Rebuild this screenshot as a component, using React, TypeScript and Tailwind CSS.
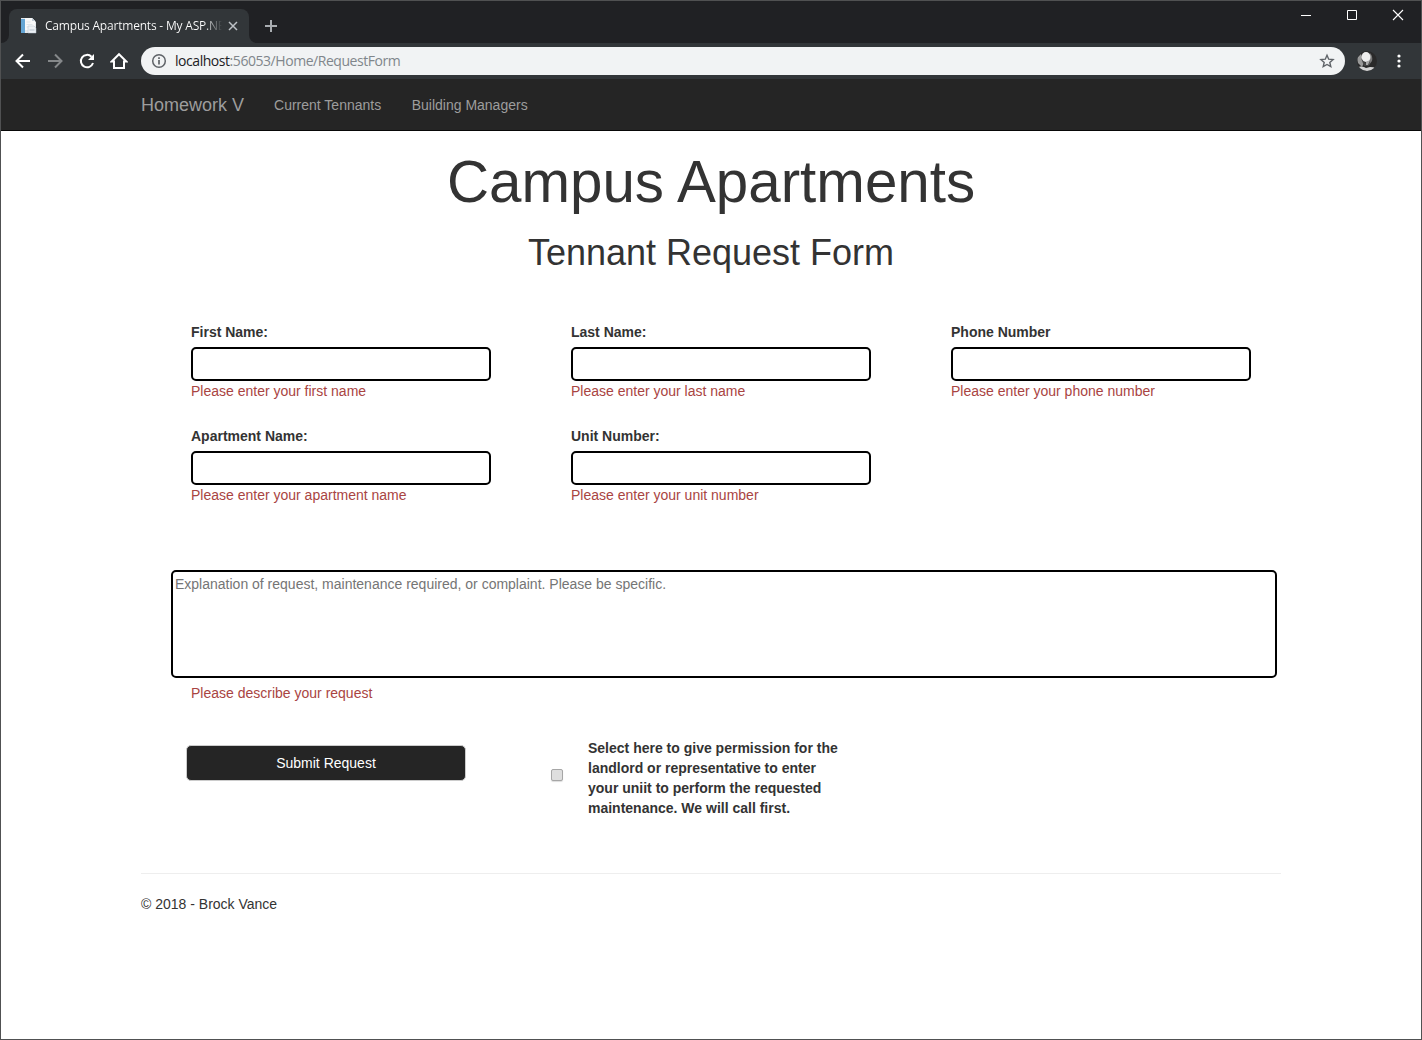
import React from "react";

const chromeFont = "font-['Open_Sans','Noto_Sans',sans-serif]";

function TabStrip() {
  return (
    <div className="flex h-[42px] items-end bg-[#202124]">
      <div className="flex h-[34px] w-2 items-end bg-[#323639]">
        <div className="h-full w-full rounded-br-lg bg-[#202124]" />
      </div>
      <div className="flex h-[34px] w-[240px] items-center rounded-t-lg bg-[#323639] pl-[11px]">
        <svg width="18" height="18" viewBox="0 0 18 18">
          <path d="M1 1h11l4 4v11H1z" fill="#e4e9ed" />
          <path d="M1 2h4v14H1z" fill="#64a5d4" />
          <path d="M5 1h7l3 3v9H5z" fill="#f8f9fa" />
          <path d="M12 1v3h3z" fill="#c2cdd7" />
          <path d="M6.500 5h4M6.500 7.500h6M6.500 10h6" stroke="#e0e6ea" />
          <path d="M8 9h6l2 2v5H8z" fill="#edf1f5" stroke="#b5c2cd" strokeWidth=".5" />
          <path d="M9.500 13h5" stroke="#b5c2cd" />
        </svg>
        <span
          className={`${chromeFont} ml-[7px] w-[177px] bg-gradient-to-r from-white from-90% to-transparent bg-clip-text text-[12px] leading-[18px] tracking-[-0.2px] whitespace-nowrap text-transparent`}
        >
          Campus Apartments - My ASP.NE
        </span>
        <svg className="ml-[6px]" width="10" height="10" viewBox="0 0 10 10">
          <path d="m1 1 8 8M9 1 1 9" stroke="#bdc1c6" strokeWidth="1.500" />
        </svg>
      </div>
      <div className="h-[34px] w-2 bg-[#323639]">
        <div className="h-full w-full rounded-bl-lg bg-[#202124]" />
      </div>
      <svg className="mb-[11px] ml-[8px]" width="12" height="12" viewBox="0 0 12 12">
        <path d="M6 0v12M0 6h12" stroke="#a9adb1" strokeWidth="2" />
      </svg>
      <div className="mr-[17px] mb-[22px] ml-auto flex items-center">
        <svg className="mr-[35px]" width="10" height="12" viewBox="0 0 10 12">
          <path d="M0 6.500h10" stroke="#fff" />
        </svg>
        <svg className="mr-[34px]" width="12" height="12" viewBox="0 0 12 12">
          <path d="M1.500 1.500h9v9h-9z" fill="none" stroke="#fff" />
        </svg>
        <svg width="12" height="12" viewBox="0 0 12 12">
          <path d="m1 1 10 10M11 1 1 11" stroke="#fff" strokeWidth="1.100" />
        </svg>
      </div>
    </div>
  );
}

function Toolbar() {
  return (
    <div className="flex h-9 items-center bg-[#323639] pl-[13px]">
      <div className="flex gap-[14px]">
        <svg width="18" height="18" viewBox="0 0 18 18" fill="none" stroke="#fff" strokeWidth="2">
          <path d="M16 9H3M9 2.500 2.500 9 9 15.500" />
        </svg>
        <svg width="18" height="18" viewBox="0 0 18 18" fill="none" stroke="#85888a" strokeWidth="2">
          <path d="M2 9h13M9 2.500 15.500 9 9 15.500" />
        </svg>
        <svg width="18" height="18" viewBox="0 0 18 18" fill="none">
          <path d="M15 11A6.200 6.200 0 1 1 13.500 4.700" stroke="#fff" strokeWidth="2" />
          <path d="M16 2v6h-6z" fill="#fff" />
        </svg>
        <svg width="18" height="18" viewBox="0 0 18 18" fill="none" stroke="#fff" strokeWidth="2">
          <path d="M1.700 9.500H4V16h10V9.500h2.300L9 2.200z" />
        </svg>
      </div>
      <div className="ml-[13px] flex h-7 w-[1204px] items-center rounded-full bg-[#f1f3f4] pl-[10px]">
        <svg width="16" height="16" viewBox="0 0 16 16" fill="none">
          <circle cx="8" cy="8" r="6.300" stroke="#5f6368" strokeWidth="1.500" />
          <path d="M8 7v4.500M8 4.200V6" stroke="#5f6368" strokeWidth="1.700" />
        </svg>
        <span className={`${chromeFont} ml-2 text-[14px] leading-5 tracking-[-0.45px] text-[#80868b]`}>
          <span className="text-[#202124]">localhost</span>:56053/Home/RequestForm
        </span>
        <svg className="mr-[10px] ml-auto" width="16" height="16" viewBox="0 0 16 16">
          <path
            d="m8 2.200 1.700 4 4.400.4-3.300 2.900 1 4.200L8 11.500l-3.800 2.200 1-4.200-3.300-2.900 4.400-.4z"
            fill="none"
            stroke="#5f6368"
            strokeWidth="1.400"
          />
        </svg>
      </div>
      <svg className="ml-[12px]" width="20" height="20" viewBox="0 0 20 20">
        <defs>
          <clipPath id="avatar">
            <circle cx="10" cy="10" r="10" />
          </clipPath>
        </defs>
        <g clipPath="url(#avatar)">
          <path d="M0 0h20v20H0z" fill="#292929" />
          <path d="M0 7 4 3l3 9-2 4-4-4z" fill="#999" />
          <path d="M13 2q3 3 2 8l-3 4-2-3z" fill="#777" />
          <ellipse cx="9" cy="6" rx="4.500" ry="5" fill="#eee" />
          <path d="m4 7 3 4 3 1 3-2-1 5H7z" fill="#444" />
          <path d="m9 11 4-2-2 5H9z" fill="#aaa" />
          <path d="M1 16q3-1 6 0l2 1 4-1q4 0 5 1v3H1z" fill="#d4d4d4" />
        </g>
      </svg>
      <svg className="ml-[20px]" width="4" height="14" viewBox="0 0 4 14" fill="#fff">
        <circle cx="2" cy="2" r="1.600" />
        <circle cx="2" cy="7" r="1.600" />
        <circle cx="2" cy="12" r="1.600" />
      </svg>
    </div>
  );
}

const fields = [
  { label: "First Name:", error: "Please enter your first name" },
  { label: "Last Name:", error: "Please enter your last name" },
  { label: "Phone Number", error: "Please enter your phone number" },
  { label: "Apartment Name:", error: "Please enter your apartment name" },
  { label: "Unit Number:", error: "Please enter your unit number" },
];

export default function App() {
  return (
    <div className="h-[1040px] w-[1422px] overflow-hidden border border-[#505152] bg-white font-['Liberation_Sans',Arial,sans-serif] text-[14px] leading-5 text-[#333]">
      <TabStrip />
      <Toolbar />
      <nav className="h-[52px] border-b border-[#080808] bg-[#252525] text-[#9d9d9d]">
        <div className="mx-auto flex h-[51px] w-[1140px] items-center">
          <a className="text-[18px]">Homework V</a>
          <a className="ml-[30px]">Current Tennants</a>
          <a className="ml-[30.500px]">Building Managers</a>
        </div>
      </nav>
      <main className="mx-auto w-[1140px]">
        <h1 className="pt-[18px] text-center text-[58.300px] leading-[66px]">Campus Apartments</h1>
        <h2 className="mt-[18px] text-center text-[36px] leading-[40px]">Tennant Request Form</h2>
        <form>
          <div className="mt-[49px] grid grid-cols-3 gap-y-[25px]">
            {fields.map((f) => (
              <div key={f.label} className="pl-[50px]">
                <label className="mb-[5px] block font-bold">{f.label}</label>
                <input className="block h-[34px] w-[300px] rounded-[5px] border-2 border-black px-2" />
                <p className="text-[#a94442]">{f.error}</p>
              </div>
            ))}
          </div>
          <textarea
            className="mt-[65px] ml-[30px] block h-[108px] w-[1106px] resize-none rounded-[5px] border-2 border-black p-0.5 placeholder:text-[#757575]"
            placeholder="Explanation of request, maintenance required, or complaint. Please be specific."
          />
          <p className="mt-[5px] ml-[50px] text-[#a94442]">Please describe your request</p>
          <div className="mt-[35px] flex items-start pl-[45px]">
            <button
              type="button"
              className="mt-[7px] h-[36px] w-[280px] rounded-[5px] border border-[#ccc] bg-[#252525] text-white"
            >
              Submit Request
            </button>
            <input
              type="checkbox"
              className="mt-[31px] ml-[85px] h-3 w-3 appearance-none rounded-[2px] border border-[#a6a6a6] bg-[#dedede] shadow-[0_1px_1px_#ddd]"
            />
            <label className="ml-[25px] font-bold">
              Select here to give permission for the
              <br />
              landlord or representative to enter
              <br />
              your uniit to perform the requested
              <br />
              maintenance. We will call first.
            </label>
          </div>
        </form>
        <hr className="mt-[55px] border-[#eee]" />
        <footer className="mt-5">© 2018 - Brock Vance</footer>
      </main>
    </div>
  );
}
